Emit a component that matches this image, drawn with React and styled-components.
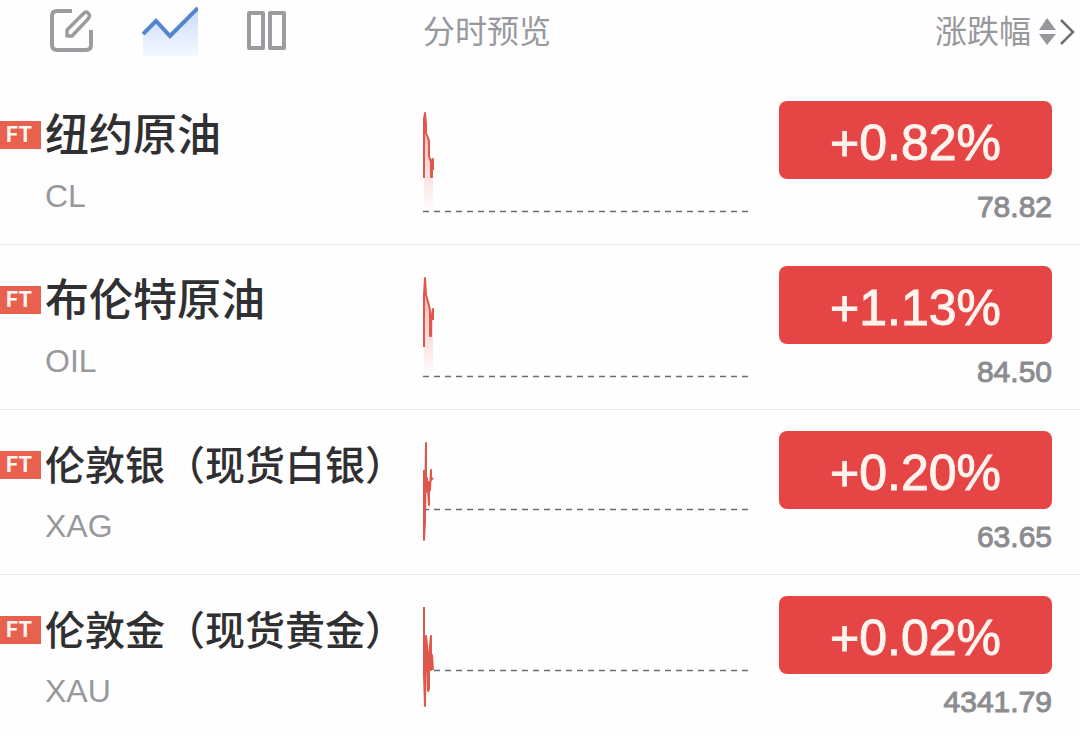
import styled, { createGlobalStyle } from "styled-components";

const quotes = [
    {
        name: "纽约原油",
        code: "CL",
        change: "+0.82%",
        price: "78.82",
        base: 111,
        points: "1,78 1,19 2,13 3,24 3,33 5,38 6,41 6,56 8,62 8,77 9,77 9,60 10,59 10,70",
    },
    {
        name: "布伦特原油",
        code: "OIL",
        change: "+1.13%",
        price: "84.50",
        base: 111,
        points: "1,82 1,30 2,13 3,30 5,37 6,41 7,45 7,71 8,71 8,55 10,44 10,55",
    },
    {
        name: "伦敦银（现货白银）",
        code: "XAG",
        change: "+0.20%",
        price: "63.65",
        base: 79,
        compact: true,
        points: "1,40 1,110 2,92 3,13 3,62 4,48 5,60 6,75 6,52 7,60 8,40 8,50 10,48",
    },
    {
        name: "伦敦金（现货黄金）",
        code: "XAU",
        change: "+0.02%",
        price: "4341.79",
        base: 75,
        compact: true,
        points: "1,12 1,80 2,111 3,41 4,50 5,96 6,94 6,60 8,41 8,75 9,60 10,75",
    },
];

const Sparkline = ({ id, base, points, filled }) => (
    <ChartSvg aria-hidden="true">
        <defs>
            <linearGradient id={id} x1="0" y1="0" x2="0" y2="1">
                <stop offset="0" stopColor="#e5493f" stopOpacity="0.45" />
                <stop offset="1" stopColor="#e5493f" stopOpacity="0" />
            </linearGradient>
        </defs>
        {filled && <polygon points={`${points} 10,${base} 1,${base}`} fill={`url(#${id})`} />}
        <line x1="0" y1={base + 0.5} x2="100%" y2={base + 0.5} stroke="#6b6b6f" strokeWidth="1.5" strokeDasharray="6 5" />
        <polyline points={points} fill="none" stroke="#e0574b" strokeWidth="2" strokeLinejoin="round" />
    </ChartSvg>
);

const EditIcon = () => (
    <svg width="44" height="44" viewBox="0 0 44 44" fill="none" stroke="#9b9ca0" strokeWidth="4" strokeLinejoin="round">
        <path d="M22 2H7Q2 2 2 7v29q0 5 5 5h29q5 0 5-5V21" />
        <path d="M17 27v-6L33 5q3-3 5-1 3 2 0 6L22 27z" strokeWidth="3.5" />
    </svg>
);

const TrendIcon = () => (
    <svg width="56" height="50" viewBox="0 0 56 50">
        <defs>
            <linearGradient id="trend" x1="0" y1="0" x2="0" y2="1">
                <stop offset="0" stopColor="#c9dbf8" />
                <stop offset="1" stopColor="#f4f8ff" />
            </linearGradient>
        </defs>
        <path d="M1 28L14 15l14 15L56 2v48H1z" fill="url(#trend)" />
        <path d="M1 28L14 15l14 15L56 2" fill="none" stroke="#5685cf" strokeWidth="4" />
    </svg>
);

const ColumnsIcon = () => (
    <svg width="40" height="40" viewBox="0 0 40 40" fill="none" stroke="#9b9ca0" strokeWidth="4" strokeLinejoin="round">
        <rect x="3" y="2" width="14" height="35" />
        <rect x="24" y="2" width="14" height="35" />
    </svg>
);

const SortIcon = () => (
    <svg width="36" height="28" viewBox="0 0 36 28">
        <path d="M0 12L8 0l9 12zM0 16h17L8 27z" fill="#97979b" />
        <path d="M22 2l12 12-12 12" fill="none" stroke="#6f7074" strokeWidth="2.5" />
    </svg>
);

const App = () => {
    return (
        <>
            <GlobalStyle />
            <QuoteTable>
                <colgroup>
                    <NameCol />
                    <col />
                    <ChangeCol />
                </colgroup>
                <thead>
                    <tr>
                        <HeadCell>
                            <Toolbar>
                                <IconButton aria-label="编辑">
                                    <EditIcon />
                                </IconButton>
                                <IconButton aria-label="分时">
                                    <TrendIcon />
                                </IconButton>
                                <IconButton aria-label="分栏">
                                    <ColumnsIcon />
                                </IconButton>
                            </Toolbar>
                        </HeadCell>
                        <HeadCell>分时预览</HeadCell>
                        <HeadCell>
                            <SortButton>
                                涨跌幅
                                <SortIcon />
                            </SortButton>
                        </HeadCell>
                    </tr>
                </thead>
                <tbody>
                    {quotes.map((q) => (
                        <QuoteRow key={q.code}>
                            <NameCell>
                                <NameLine>
                                    <Tag>FT</Tag>
                                    <Name $compact={q.compact}>{q.name}</Name>
                                </NameLine>
                                <Code>{q.code}</Code>
                            </NameCell>
                            <ChartCell>
                                <Sparkline id={`fill-${q.code}`} base={q.base} points={q.points} filled={!q.compact} />
                            </ChartCell>
                            <ChangeCell>
                                <Change>{q.change}</Change>
                                <Price>{q.price}</Price>
                            </ChangeCell>
                        </QuoteRow>
                    ))}
                </tbody>
            </QuoteTable>
        </>
    );
};

const GlobalStyle = createGlobalStyle`
    body {
        margin: 0;
        background-color: #fefefe;
        font-family: "Liberation Sans", "Noto Sans CJK SC", sans-serif;
    }
`;

const QuoteTable = styled.table`
    width: 100%;
    table-layout: fixed;
    border-collapse: separate;
    border-spacing: 0;
`;

const NameCol = styled.col`
    width: 423px;
`;

const ChangeCol = styled.col`
    width: 301px;
`;

const HeadCell = styled.th`
    height: 64px;
    padding: 0 0 16px;
    text-align: left;
    font-size: 32px;
    line-height: 64px;
    font-weight: 400;
    color: #98999d;
`;

const Toolbar = styled.div`
    display: flex;
    align-items: center;
    gap: 48px;
    height: 62px;
    padding: 0 0 2px 50px;
`;

const IconButton = styled.button`
    display: flex;
    padding: 0;
    border: none;
    background: none;
    cursor: pointer;
`;

const SortButton = styled.button`
    display: flex;
    align-items: center;
    gap: 8px;
    margin-left: auto;
    padding: 0 5px 0 0;
    border: none;
    background: none;
    font: inherit;
    color: inherit;
    cursor: pointer;
`;

const QuoteRow = styled.tr`
    & > td {
        height: 165px;
        box-sizing: border-box;
        vertical-align: top;
        border-bottom: 1px solid #ebebeb;
    }
    &:last-child > td {
        height: auto;
        border-bottom: none;
    }
`;

const NameCell = styled.td`
    padding: 26px 0 0;
`;

const NameLine = styled.div`
    display: flex;
    align-items: center;
    gap: 4px;
`;

const Tag = styled.span`
    width: 41px;
    box-sizing: border-box;
    padding-left: 6px;
    background-color: #e8614e;
    color: #fff5f0;
    font-family: Inter, sans-serif;
    font-size: 21px;
    font-weight: 700;
    line-height: 28px;
`;

const Name = styled.span`
    padding-top: 2px;
    font-size: ${({ $compact }) => ($compact ? "40px" : "44px")};
    font-weight: 500;
    line-height: 56px;
    color: #303032;
    white-space: nowrap;
`;

const Code = styled.div`
    margin-top: 12px;
    padding-left: 45px;
    font-size: 32px;
    line-height: 40px;
    color: #98999d;
`;

const ChartCell = styled.td`
    padding: 20px 31px 0 0;
`;

const ChartSvg = styled.svg`
    display: block;
    width: 100%;
    height: 125px;
`;

const ChangeCell = styled.td`
    padding: 21px 28px 0 0;
    text-align: right;
`;

const Change = styled.div`
    padding-top: 6px;
    border-radius: 8px;
    background-color: #e64545;
    color: #fff3ee;
    font-size: 50px;
    line-height: 72px;
    text-align: center;
    -webkit-text-stroke: 1px #fff3ee;
`;

const Price = styled.div`
    margin-top: 10px;
    font-size: 30px;
    line-height: 36px;
    color: #8c8c90;
    -webkit-text-stroke: 1px #8c8c90;
`;

export default App;
